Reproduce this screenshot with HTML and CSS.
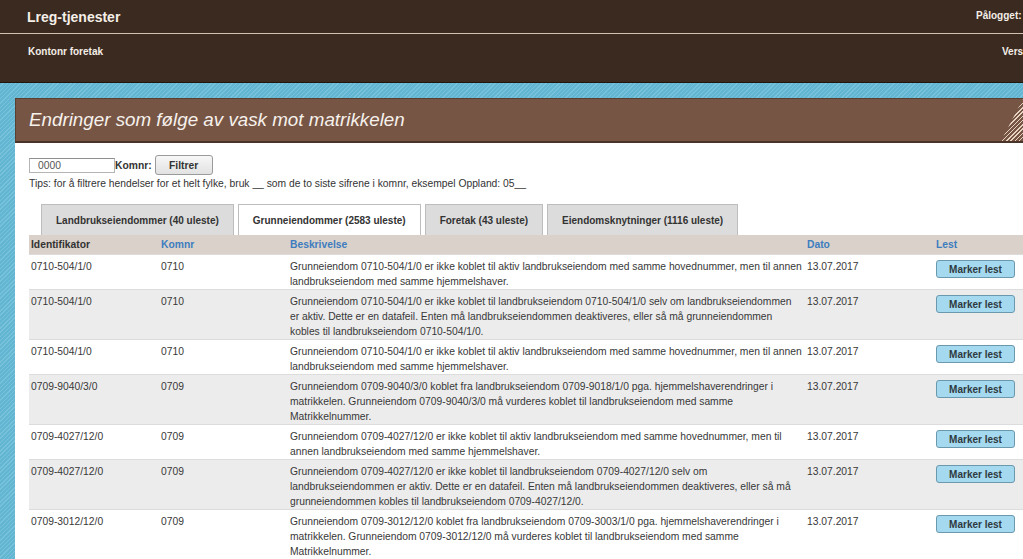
FILE: index.html
```html
<!DOCTYPE html>
<html lang="no">
<head>
<meta charset="utf-8">
<title>Lreg-tjenester</title>
<link rel="stylesheet" href="styles.css">
</head>
<body>
<header class="site-header">
  <div class="topbar">
    <div class="brand">Lreg-tjenester</div>
    <div class="login">Pålogget:</div>
  </div>
  <div class="subbar">
    <div class="sub-title">Kontonr foretak</div>
    <div class="version">Vers</div>
  </div>
</header>
<main class="stage">
  <section class="panel">
    <div class="banner">
      <h1 class="banner-title">Endringer som følge av vask mot matrikkelen</h1>
    </div>
    <div class="panel-body">
      <form class="filter">
        <input class="filter-input" type="text" value="0000">
        <label class="filter-label">Komnr:</label>
        <button class="btn-filter" type="button">Filtrer</button>
      </form>
      <p class="tips">Tips: for å filtrere hendelser for et helt fylke, bruk __ som de to siste sifrene i komnr, eksempel Oppland: 05__</p>
      <nav class="tabs">
        <div class="tab">Landbrukseiendommer (40 uleste)</div>
        <div class="tab tab-active">Grunneiendommer (2583 uleste)</div>
        <div class="tab">Foretak (43 uleste)</div>
        <div class="tab">Eiendomsknytninger (1116 uleste)</div>
      </nav>
      <table class="grid">
        <colgroup>
          <col class="c-id"><col class="c-kom"><col class="c-desc"><col class="c-date"><col class="c-lest">
        </colgroup>
        <thead>
          <tr>
            <th class="th-plain">Identifikator</th>
            <th>Komnr</th>
            <th>Beskrivelse</th>
            <th>Dato</th>
            <th>Lest</th>
          </tr>
        </thead>
        <tbody>
          <tr>
            <td>0710-504/1/0</td><td>0710</td>
            <td>Grunneiendom 0710-504/1/0 er ikke koblet til aktiv landbrukseiendom med samme hovednummer, men til annen<br>landbrukseiendom med samme hjemmelshaver.</td>
            <td>13.07.2017</td><td><button class="btn-read" type="button">Marker lest</button></td>
          </tr>
          <tr class="alt">
            <td>0710-504/1/0</td><td>0710</td>
            <td>Grunneiendom 0710-504/1/0 er ikke koblet til landbrukseiendom 0710-504/1/0 selv om landbrukseiendommen<br>er aktiv. Dette er en datafeil. Enten må landbrukseiendommen deaktiveres, eller så må grunneiendommen<br>kobles til landbrukseiendom 0710-504/1/0.</td>
            <td>13.07.2017</td><td><button class="btn-read" type="button">Marker lest</button></td>
          </tr>
          <tr>
            <td>0710-504/1/0</td><td>0710</td>
            <td>Grunneiendom 0710-504/1/0 er ikke koblet til aktiv landbrukseiendom med samme hovednummer, men til annen<br>landbrukseiendom med samme hjemmelshaver.</td>
            <td>13.07.2017</td><td><button class="btn-read" type="button">Marker lest</button></td>
          </tr>
          <tr class="alt">
            <td>0709-9040/3/0</td><td>0709</td>
            <td>Grunneiendom 0709-9040/3/0 koblet fra landbrukseiendom 0709-9018/1/0 pga. hjemmelshaverendringer i<br>matrikkelen. Grunneiendom 0709-9040/3/0 må vurderes koblet til landbrukseiendom med samme<br>Matrikkelnummer.</td>
            <td>13.07.2017</td><td><button class="btn-read" type="button">Marker lest</button></td>
          </tr>
          <tr>
            <td>0709-4027/12/0</td><td>0709</td>
            <td>Grunneiendom 0709-4027/12/0 er ikke koblet til aktiv landbrukseiendom med samme hovednummer, men til<br>annen landbrukseiendom med samme hjemmelshaver.</td>
            <td>13.07.2017</td><td><button class="btn-read" type="button">Marker lest</button></td>
          </tr>
          <tr class="alt">
            <td>0709-4027/12/0</td><td>0709</td>
            <td>Grunneiendom 0709-4027/12/0 er ikke koblet til landbrukseiendom 0709-4027/12/0 selv om<br>landbrukseiendommen er aktiv. Dette er en datafeil. Enten må landbrukseiendommen deaktiveres, eller så må<br>grunneiendommen kobles til landbrukseiendom 0709-4027/12/0.</td>
            <td>13.07.2017</td><td><button class="btn-read" type="button">Marker lest</button></td>
          </tr>
          <tr>
            <td>0709-3012/12/0</td><td>0709</td>
            <td>Grunneiendom 0709-3012/12/0 koblet fra landbrukseiendom 0709-3003/1/0 pga. hjemmelshaverendringer i<br>matrikkelen. Grunneiendom 0709-3012/12/0 må vurderes koblet til landbrukseiendom med samme<br>Matrikkelnummer.</td>
            <td>13.07.2017</td><td><button class="btn-read" type="button">Marker lest</button></td>
          </tr>
        </tbody>
      </table>
    </div>
  </section>
</main>
</body>
</html>
```

FILE: styles.css
```css
html, body {
  margin: 0;
  padding: 0;
  width: 1023px;
  height: 559px;
  overflow: hidden;
}
body {
  font-family: "Liberation Sans", Arial, sans-serif;
  font-size: 10px;
  color: #333;
  background: #67b8d3;
}

/* header */
.site-header {
  background: #3b2a1f;
  color: #f4efe8;
  font-weight: bold;
  border-bottom: 1px solid #22170f;
}
.topbar {
  height: 33px;
  display: flex;
  align-items: center;
  justify-content: space-between;
  padding-left: 27px;
  border-bottom: 1px solid #cfc2b2;
}
.brand {
  font-size: 14px;
}
.login {
  width: 47px;
  white-space: nowrap;
  margin-bottom: 3px;
}
.subbar {
  height: 48px;
  display: flex;
  justify-content: space-between;
  align-items: flex-start;
  padding-left: 28px;
  padding-top: 12px;
  box-sizing: border-box;
}
.version {
  width: 21px;
  white-space: nowrap;
}

/* striped stage */
.stage {
  height: 476px;
  padding: 15px 0 0 15px;
  box-sizing: border-box;
  background: repeating-linear-gradient(135deg, #63b6d2 0 2px, #78c2dc 2px 3px);
}
.panel {
  background: #fff;
  height: 100%;
}
.banner {
  position: relative;
  background: #765544;
  border-top: 1px solid #5b4032;
  border-left: 1px solid #5b4032;
  border-bottom: 2px solid #4a3327;
  height: 42px;
  display: flex;
  align-items: center;
  padding-left: 13px;
  overflow: hidden;
}
.banner::after {
  content: "";
  position: absolute;
  right: 0;
  top: 0;
  bottom: 0;
  width: 22px;
  background: repeating-linear-gradient(135deg, #e6d3c1 0 1px, #765544 1px 3px);
  clip-path: polygon(100% 0, 100% 100%, 0 100%);
}
.banner-title {
  margin: 0;
  font-size: 18.8px;
  font-weight: normal;
  font-style: italic;
  color: #f6f1ec;
}

.panel-body {
  padding: 12px 0 0 14px;
}
.filter {
  display: flex;
  align-items: center;
  height: 20px;
  margin: 0;
}
.filter-input {
  width: 86px;
  height: 15px;
  box-sizing: border-box;
  border: 1px solid #b4b4b4;
  border-top-color: #8e8e8e;
  padding: 0 0 0 8px;
  font-family: inherit;
  font-size: 10.3px;
  color: #555;
}
.filter-label {
  font-weight: bold;
  font-size: 10.3px;
}
.btn-filter {
  margin-left: 3px;
  width: 58px;
  height: 20px;
  border: 1px solid #9a9a9a;
  border-radius: 3px;
  background: linear-gradient(#f7f7f7, #e2e2e2);
  font-family: inherit;
  font-size: 10.3px;
  font-weight: bold;
  color: #333;
  padding: 0;
}
.tips {
  margin: 1px 0 0 0;
  line-height: 15px;
  font-size: 10.3px;
}

/* tabs */
.tabs {
  display: flex;
  gap: 4px;
  padding-left: 12px;
  margin-top: 13px;
  height: 31px;
}
.tab {
  background: #dcdcdc;
  border: 1px solid #bdbdbd;
  border-bottom: none;
  padding: 0 14px;
  display: flex;
  align-items: center;
  font-weight: bold;
  font-size: 10px;
  color: #333;
}
.tab-active {
  background: #fff;
}

/* table */
.grid {
  border-collapse: collapse;
  table-layout: fixed;
  width: 1030px;
  line-height: 15px;
  font-size: 10.3px;
}
.c-id { width: 130px; }
.c-kom { width: 129px; }
.c-desc { width: 517px; }
.c-date { width: 129px; }
.c-lest { width: 125px; }
.grid th {
  background: #dad1ca;
  height: 19px;
  padding: 0 2px;
  text-align: left;
  font-weight: bold;
  color: #3d7dbf;
}
.grid th.th-plain {
  color: #333;
}
.grid td {
  vertical-align: top;
  padding: 4px 0 0 2px;
  border-top: 1px solid #dcdcdc;
  color: #383838;
}
.grid tr.alt td {
  background: #ececec;
}
.btn-read {
  margin-top: 1px;
  width: 79px;
  height: 18px;
  padding: 0;
  border: 1px solid #6a98ad;
  border-radius: 3px;
  background: #a4d9f0;
  font-family: inherit;
  font-size: 10px;
  font-weight: bold;
  color: #2e3a40;
}
```
